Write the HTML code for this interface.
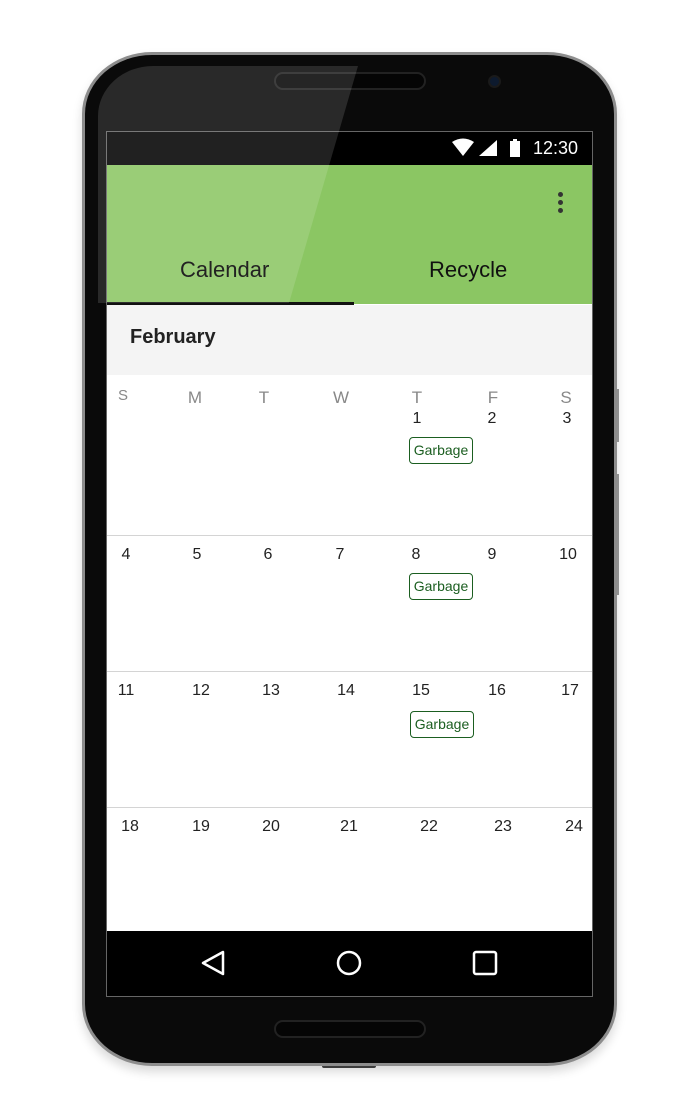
<!DOCTYPE html>
<html><head><meta charset="utf-8"><style>
*{margin:0;padding:0;box-sizing:border-box}
body{width:700px;height:1120px;background:#fff;position:relative;overflow:hidden;font-family:"Liberation Sans",sans-serif}
.abs{position:absolute}
.phone{left:82px;top:52px;width:535px;height:1014px;border-radius:70px/62px;background:#0a0a0a;border:3px solid #8d8d8d;box-shadow:0 6px 10px rgba(0,0,0,0.15);overflow:hidden}
.screen{left:106px;top:131px;width:487px;height:866px;background:#fff;border:1px solid #666;overflow:hidden}
.c{position:absolute;transform:translateX(-50%);font-size:16px;color:#222}
.h{position:absolute;transform:translateX(-50%);font-size:17px;color:#888}
.badge{position:absolute;left:409px;width:64px;height:27px;border:1.5px solid #1b5e20;border-radius:4px;color:#1b5e20;font-size:14px;text-align:center;line-height:24px}
.line{position:absolute;left:107px;width:485px;height:1px;background:#d4d4d4}
</style></head><body>
<div class="abs" style="left:615px;top:389px;width:4px;height:53px;background:#9a9a9a"></div>
<div class="abs" style="left:615px;top:474px;width:4px;height:121px;background:#9a9a9a"></div>
<div class="abs" style="left:322px;top:1063px;width:54px;height:5px;background:#444;border-radius:2px"></div>
<div class="abs phone"></div>
<div class="abs" style="left:274px;top:72px;width:152px;height:18px;border-radius:9px;background:#050505;border:2px solid #222"></div>
<div class="abs" style="left:488px;top:75px;width:13px;height:13px;border-radius:50%;background:#0d1a2e;border:2px solid #1a1a1a"></div>
<div class="abs" style="left:274px;top:1020px;width:152px;height:18px;border-radius:9px;background:#050505;border:2px solid #222"></div>
<div class="abs screen">
 <div class="abs" style="left:0;top:0;width:487px;height:33px;background:#000"></div>
 <div class="abs" style="left:0;top:33px;width:487px;height:139px;background:#8bc663"></div>
 <div class="abs" style="left:0;top:170px;width:247px;height:3px;background:#111"></div>
 <div class="abs" style="left:0;top:173px;width:487px;height:70px;background:#f4f4f4"></div>
</div>
<!-- glare -->
<div class="abs" style="left:98px;top:66px;width:300px;height:237px;border-top-left-radius:55px 50px;overflow:hidden;pointer-events:none">
 <div class="abs" style="left:0;top:0;width:300px;height:237px;background:rgba(255,255,255,0.13);clip-path:polygon(0 0,260px 0,191px 237px,0 237px)"></div>
</div>
<!-- status icons -->
<svg class="abs" style="left:450px;top:138px" width="80" height="20" viewBox="0 0 80 20">
 <path d="M2 4 Q13 -3 24 4 L13 18 Z" fill="#fff"/>
 <path d="M29 18 L47 18 L47 2 Z" fill="#fff"/>
 <rect x="60" y="3" width="10" height="16" fill="#fff"/><rect x="63" y="1" width="4" height="3" fill="#fff"/>
</svg>
<div class="abs" style="left:533px;top:138px;color:#fff;font-size:18px">12:30</div>
<div class="abs" style="left:558px;top:192px"><div style="width:5px;height:5px;border-radius:50%;background:#333;margin-bottom:3px"></div><div style="width:5px;height:5px;border-radius:50%;background:#333;margin-bottom:3px"></div><div style="width:5px;height:5px;border-radius:50%;background:#333"></div></div>
<div class="abs" style="left:180px;top:257px;font-size:22px;color:#222">Calendar</div>
<div class="abs" style="left:429px;top:257px;font-size:22px;color:#111">Recycle</div>
<div class="abs" style="left:130px;top:326px;font-size:20px;color:#222;font-weight:bold">February</div>
<div class="line" style="top:535px"></div><div class="line" style="top:671px"></div><div class="line" style="top:807px"></div>
<div class="h" style="left:123px;top:387px;font-size:15px">S</div><div class="h" style="left:195px;top:388px">M</div><div class="h" style="left:264px;top:388px">T</div><div class="h" style="left:341px;top:388px">W</div><div class="h" style="left:417px;top:388px">T</div><div class="h" style="left:493px;top:388px">F</div><div class="h" style="left:566px;top:388px">S</div>
<div class="c" style="left:417px;top:410px">1</div><div class="c" style="left:492px;top:410px">2</div><div class="c" style="left:567px;top:410px">3</div>
<div class="c" style="left:126px;top:546px">4</div><div class="c" style="left:197px;top:546px">5</div><div class="c" style="left:268px;top:546px">6</div><div class="c" style="left:340px;top:546px">7</div><div class="c" style="left:416px;top:546px">8</div><div class="c" style="left:492px;top:546px">9</div><div class="c" style="left:568px;top:546px">10</div>
<div class="c" style="left:126px;top:682px">11</div><div class="c" style="left:201px;top:682px">12</div><div class="c" style="left:271px;top:682px">13</div><div class="c" style="left:346px;top:682px">14</div><div class="c" style="left:421px;top:682px">15</div><div class="c" style="left:497px;top:682px">16</div><div class="c" style="left:570px;top:682px">17</div>
<div class="c" style="left:130px;top:818px">18</div><div class="c" style="left:201px;top:818px">19</div><div class="c" style="left:271px;top:818px">20</div><div class="c" style="left:349px;top:818px">21</div><div class="c" style="left:429px;top:818px">22</div><div class="c" style="left:503px;top:818px">23</div><div class="c" style="left:574px;top:818px">24</div>
<div class="badge" style="top:437px">Garbage</div>
<div class="badge" style="top:573px">Garbage</div>
<div class="badge" style="top:711px;left:410px">Garbage</div>
<div class="abs" style="left:107px;top:931px;width:485px;height:65px;background:#000"></div>
<svg class="abs" style="left:107px;top:931px" width="485" height="65">
 <path d="M96 32 L116 21 L116 43 Z" fill="none" stroke="#fff" stroke-width="2.5" stroke-linejoin="round"/>
 <circle cx="242" cy="32" r="11" fill="none" stroke="#fff" stroke-width="2.5"/>
 <rect x="367" y="21" width="22" height="22" rx="2" fill="none" stroke="#fff" stroke-width="2.5"/>
</svg>
</body></html>
